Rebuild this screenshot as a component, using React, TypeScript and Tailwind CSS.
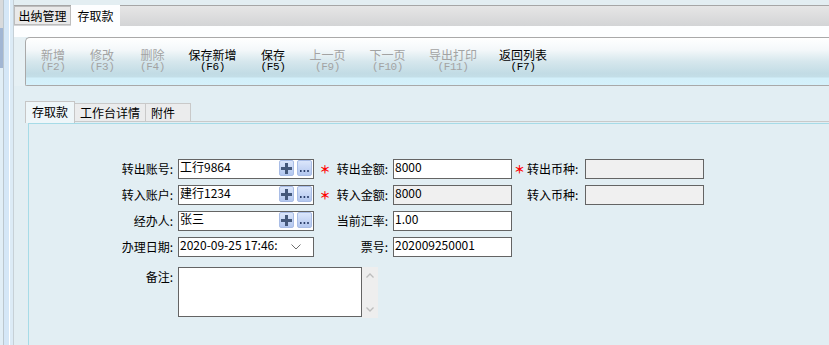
import type { ReactNode } from "react";

const buttons = [
  { t: "新增", k: "(F2)", w: "w-[48px]", off: true },
  { t: "修改", k: "(F3)", w: "w-[50px]", off: true },
  { t: "删除", k: "(F4)", w: "w-[51px]", off: true },
  { t: "保存新增", k: "(F6)", w: "w-[69px]", off: false },
  { t: "保存", k: "(F5)", w: "w-[52px]", off: false },
  { t: "上一页", k: "(F9)", w: "w-[57px]", off: true },
  { t: "下一页", k: "(F10)", w: "w-[63px]", off: true },
  { t: "导出打印", k: "(F11)", w: "w-[68px]", off: true },
  { t: "返回列表", k: "(F7)", w: "w-[72px]", off: false },
];

function Star({ w }: { w: string }) {
  return (
    <div className={`${w} h-[20px] flex items-center justify-center text-[11px] font-bold text-[#ff0000] leading-none`}>
      ＊
    </div>
  );
}

function Label({ w, text, left }: { w: string; text: string; left?: boolean }) {
  return (
    <div className={`${w} h-[20px] flex items-center ${left ? "justify-start" : "justify-end pr-[5px]"} text-[12px] leading-[16px] text-black whitespace-nowrap`}>
      {text}
    </div>
  );
}

function Field({
  w,
  value,
  off,
  children,
}: {
  w: string;
  value?: string;
  off?: boolean;
  children?: ReactNode;
}) {
  return (
    <div className={`${w} h-[20px] border border-[#646464] flex items-start ${off ? "bg-[#f0f0f0]" : "bg-white"}`}>
      <span className="flex-1 pl-[1px] text-[12px] leading-[16px] -mt-[1px] text-black whitespace-nowrap">
        {value}
      </span>
      {children}
    </div>
  );
}

function PickButtons() {
  return (
    <div className="flex gap-[3px] pr-[1px]">
      <div className="w-[15px] h-[16px] rounded-[2px] border border-[#a9bde6] bg-[linear-gradient(#dbe6fb,#b3c7ef)] flex items-center justify-center">
        <svg width="11" height="11" viewBox="0 0 11 11">
          <rect x="4" y="0" width="3" height="11" fill="#44587a" />
          <rect x="0" y="4" width="11" height="3" fill="#44587a" />
        </svg>
      </div>
      <div className="w-[15px] h-[16px] rounded-[2px] border border-[#a9bde6] bg-[linear-gradient(#dbe6fb,#b3c7ef)] flex items-end justify-center pb-[3px]">
        <svg width="9" height="2" viewBox="0 0 9 2">
          <rect x="0" y="0" width="1.6" height="2" fill="#2b3f6b" />
          <rect x="3.6" y="0" width="1.6" height="2" fill="#2b3f6b" />
          <rect x="7.2" y="0" width="1.6" height="2" fill="#2b3f6b" />
        </svg>
      </div>
    </div>
  );
}

export default function App() {
  return (
    <div className="w-[829px] h-[345px] flex overflow-hidden bg-[#e2eef3] font-['Noto_Sans_CJK_SC','Noto_Sans',sans-serif]">
      {/* left frame strip */}
      <div className="w-[3px] flex flex-col">
        <div className="h-[28px] bg-[#d8dadc]" />
        <div className="h-[40px] bg-[#a2b6d3]" />
        <div className="flex-1 bg-[#e1eef6]" />
      </div>
      <div className="w-[1px] bg-[#bcc7ce]" />
      <div className="w-[5px] bg-[#d5e7f7]" />
      <div className="w-[1px] bg-white" />
      <div className="w-[3px] bg-[#dcebf6]" />
      <div className="w-[1px] bg-[#c6d0d6]" />

      <div className="flex-1 flex flex-col">
        {/* page tabs */}
        <div className="h-[5px] bg-[#e3eef2]" />
        <div className="h-[21px] border-t border-[#a6a6a6] bg-[linear-gradient(#e6e6e6,#d3d4d6)] flex items-start">
          <div className="w-[57px] h-[19px] border border-[#bdbdbd] bg-[#e9e9e9] flex items-center justify-center text-[12px] leading-[16px] text-black">
            出纳管理
          </div>
          <div className="w-[49px] h-[21px] -mt-[1px] bg-[#fdfeff] flex items-center justify-center text-[12px] leading-[16px] text-black">
            存取款
          </div>
        </div>
        <div className="h-[11px] bg-[#fdfeff]" />

        {/* toolbar */}
        <div className="flex h-[49px]">
          <div className="w-[11px] bg-[#e6f0f4]" />
          <div className="flex-1 border border-r-0 border-[#a9a9a9] rounded-tl-[5px] rounded-bl-[2px] bg-[linear-gradient(#ffffff_0%,#f4f8fa_25%,#d6e7ed_50%,#c2dce5_75%,#c3dee7_82%,#d3f0fa_86%,#d5f1fb_100%)] flex items-start pl-[3px] pt-[10px]">
            {buttons.map((b) => (
              <div
                key={b.t}
                className={`${b.w} flex flex-col items-center ${b.off ? "text-[#a3a3a3]" : "text-black"}`}
              >
                <span className="text-[12px] leading-[13px] whitespace-nowrap">{b.t}</span>
                <span className="font-['Liberation_Mono',monospace] text-[11px] leading-[12px] tracking-[-0.4px] whitespace-nowrap">
                  {b.k}
                </span>
              </div>
            ))}
          </div>
        </div>

        {/* sub tabs */}
        <div className="h-[15px]" />
        <div className="h-[21px] flex items-end pl-[11px]">
          <div className="w-[50px] h-[21px] border border-b-0 border-[#c6c6c6] bg-[#eef6f9] flex items-center justify-center text-[12px] leading-[16px] text-black">
            存取款
          </div>
          <div className="w-[71px] h-[19px] border border-l-0 border-[#c9c9c9] bg-[#ebeced] flex items-center justify-center text-[12px] leading-[16px] text-black">
            工作台详情
          </div>
          <div className="w-[45px] h-[19px] border border-l-0 border-[#c9c9c9] bg-[#ebeced] flex items-center pl-[5px] text-[12px] leading-[16px] text-black">
            附件
          </div>
          <div className="flex-1 h-[1px] bg-[#c9c9c9]" />
        </div>
        <div className="h-[1px] flex pl-[11px]">
          <div className="w-[50px] bg-[#eef6f9] border-x border-[#c6c6c6]" />
        </div>

        {/* form panel */}
        <div className="flex-1 ml-[14px] border-l border-t border-[#a6dbe7] pt-[35px] flex flex-col gap-[6px]">
          <div className="flex">
            <Label w="w-[149px]" text="转出账号:" />
            <Field w="w-[136px]" value="工行9864">
              <PickButtons />
            </Field>
            <Star w="w-[22px]" />
            <Label w="w-[57px]" text="转出金额:" />
            <Field w="w-[119px]" value="8000" />
            <Star w="w-[15px]" />
            <Label w="w-[58px]" text="转出币种:" left />
            <Field w="w-[119px]" off />
          </div>
          <div className="flex">
            <Label w="w-[149px]" text="转入账户:" />
            <Field w="w-[136px]" value="建行1234">
              <PickButtons />
            </Field>
            <Star w="w-[22px]" />
            <Label w="w-[57px]" text="转入金额:" />
            <Field w="w-[119px]" value="8000" off />
            <div className="w-[15px]" />
            <Label w="w-[58px]" text="转入币种:" left />
            <Field w="w-[119px]" off />
          </div>
          <div className="flex">
            <Label w="w-[149px]" text="经办人:" />
            <Field w="w-[136px]" value="张三">
              <PickButtons />
            </Field>
            <div className="w-[22px]" />
            <Label w="w-[57px]" text="当前汇率:" />
            <Field w="w-[119px]" value="1.00" />
          </div>
          <div className="flex">
            <Label w="w-[149px]" text="办理日期:" />
            <Field w="w-[136px]" value="2020-09-25 17:46:">
              <div className="w-[22px] h-[18px] flex items-center justify-start">
                <svg width="10" height="6" viewBox="0 0 10 6">
                  <polyline points="0.5,0.5 5,5 9.5,0.5" fill="none" stroke="#6e6e6e" strokeWidth="1" />
                </svg>
              </div>
            </Field>
            <div className="w-[22px]" />
            <Label w="w-[57px]" text="票号:" />
            <Field w="w-[119px]" value="202009250001" />
          </div>
          <div className="flex items-start mt-[4px]">
            <div className="w-[149px] pr-[5px] pt-[2px] text-right text-[12px] leading-[16px] text-black">备注:</div>
            <div className="w-[184px] h-[50px] border border-[#646464] bg-white" />
            <div className="w-[16px] h-[51px] bg-[#eeeeee] flex flex-col items-center justify-between py-[6px]">
              <svg width="8" height="5" viewBox="0 0 8 5">
                <polyline points="0.5,4.5 4,1 7.5,4.5" fill="none" stroke="#bdbdbd" strokeWidth="1.3" />
              </svg>
              <svg width="8" height="5" viewBox="0 0 8 5">
                <polyline points="0.5,0.5 4,4 7.5,0.5" fill="none" stroke="#bdbdbd" strokeWidth="1.3" />
              </svg>
            </div>
          </div>
        </div>
      </div>
    </div>
  );
}
